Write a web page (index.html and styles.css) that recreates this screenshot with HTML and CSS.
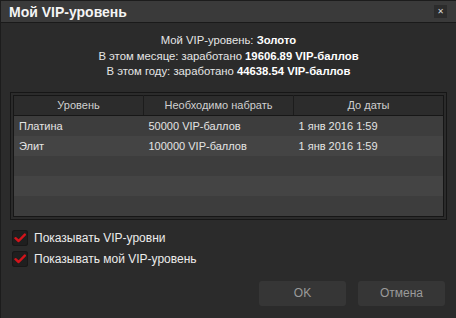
FILE: index.html
```html
<!DOCTYPE html>
<html lang="ru">
<head>
    <meta charset="UTF-8">
    <title>Мой VIP-уровень</title>
    <link rel="stylesheet" href="styles.css">
</head>
<body>
    <div class="dialog">
        <div class="titlebar">
            <span class="title">Мой VIP-уровень</span>
            <button class="close">&#x2715;</button>
        </div>
        <div class="info">
            <p>Мой VIP-уровень: <b>Золото</b></p>
            <p>В этом месяце: заработано <b>19606.89 VIP-баллов</b></p>
            <p>В этом году: заработано <b>44638.54 VIP-баллов</b></p>
        </div>
        <div class="frame">
            <table class="levels">
                <thead>
                    <tr><th class="c1">Уровень</th><th class="c2">Необходимо набрать</th><th>До даты</th></tr>
                </thead>
                <tbody>
                    <tr><td>Платина</td><td>50000 VIP-баллов</td><td>1 янв 2016 1:59</td></tr>
                    <tr><td>Элит</td><td>100000 VIP-баллов</td><td>1 янв 2016 1:59</td></tr>
                    <tr><td></td><td></td><td></td></tr>
                    <tr><td></td><td></td><td></td></tr>
                    <tr><td></td><td></td><td></td></tr>
                </tbody>
            </table>
        </div>
        <label class="check"><span class="box"><svg width="12" height="10" viewBox="0 0 12 10"><path d="M1.5 5.2 L4.6 8 L10.8 1.6" fill="none" stroke="#d3141b" stroke-width="2.4" stroke-linecap="round" stroke-linejoin="round"/></svg></span>Показывать VIP-уровни</label>
        <label class="check"><span class="box"><svg width="12" height="10" viewBox="0 0 12 10"><path d="M1.5 5.2 L4.6 8 L10.8 1.6" fill="none" stroke="#d3141b" stroke-width="2.4" stroke-linecap="round" stroke-linejoin="round"/></svg></span>Показывать мой VIP-уровень</label>
        <div class="buttons">
            <button class="btn ok">OK</button>
            <button class="btn">Отмена</button>
        </div>
    </div>
</body>
</html>
```

FILE: styles.css
```css
body{
    margin: 0;
    background-color: #2b2b2b;
    font-family: "Liberation Sans", Arial, sans-serif;
    color: #e6e6e6;
}
.dialog{
    width: 456px;
    height: 318px;
    box-sizing: border-box;
    border-top: 1px solid #1c1c1c;
    border-left: 1px solid #1c1c1c;
    background-color: #2b2b2b;
    display: flex;
    flex-direction: column;
}
.titlebar{
    height: 21px;
    background-color: #3a3a3a;
    border-bottom: 1px solid #1a1a1a;
    display: flex;
    align-items: center;
    justify-content: space-between;
    padding: 0 9px 0 8px;
}
.title{
    font-size: 14px;
    font-weight: bold;
    color: #f4f4f4;
}
.close{
    width: 13px;
    height: 13px;
    padding: 0;
    border: none;
    background-color: #2c2c2c;
    color: #d8d8d8;
    font-size: 8px;
    line-height: 13px;
    font-family: "DejaVu Sans", sans-serif;
}
.info{
    margin-top: 10px;
    text-align: center;
    font-size: 11.3px;
}
.info p{
    margin: 0;
    line-height: 15.5px;
}
.info b{
    color: #fff;
}
.frame{
    margin: 12px 9px 0 9px;
    border: 1px solid #161616;
    padding: 2px;
}
.levels{
    width: 100%;
    border: 1px solid #161616;
    border-collapse: collapse;
    font-size: 11px;
}
.levels th{
    height: 19px;
    padding: 0;
    background-color: #2c2c2c;
    border-bottom: 1px solid #171717;
    color: #d0d0d0;
    font-weight: normal;
}
.levels .c1{
    width: 129px;
    border-right: 1px solid #1c1c1c;
}
.levels .c2{
    width: 149px;
    border-right: 1px solid #1c1c1c;
}
.levels td{
    height: 20px;
    padding: 0 0 0 5px;
    color: #e4e4e4;
}
.levels tbody tr:nth-child(odd){
    background-color: #3d3d3d;
}
.levels tbody tr:nth-child(even){
    background-color: #444444;
}
.check{
    display: flex;
    align-items: center;
    margin-left: 11px;
    font-size: 12px;
    color: #ececec;
    height: 21px;
}
.check:first-of-type{
    margin-top: 8px;
}
.box{
    width: 16px;
    height: 16px;
    border-radius: 3px;
    background-color: #1f1f1f;
    box-shadow: inset 0 0 0 1px #181818;
    display: flex;
    align-items: center;
    justify-content: center;
    margin-right: 6px;
}
.buttons{
    display: flex;
    justify-content: flex-end;
    gap: 12px;
    margin: 11px 11px 0 0;
}
.btn{
    width: 87px;
    height: 25px;
    border: none;
    border-radius: 3px;
    background-color: #363636;
    color: #9a9a9a;
    font-family: "Liberation Sans", Arial, sans-serif;
    font-size: 12px;
}
```
